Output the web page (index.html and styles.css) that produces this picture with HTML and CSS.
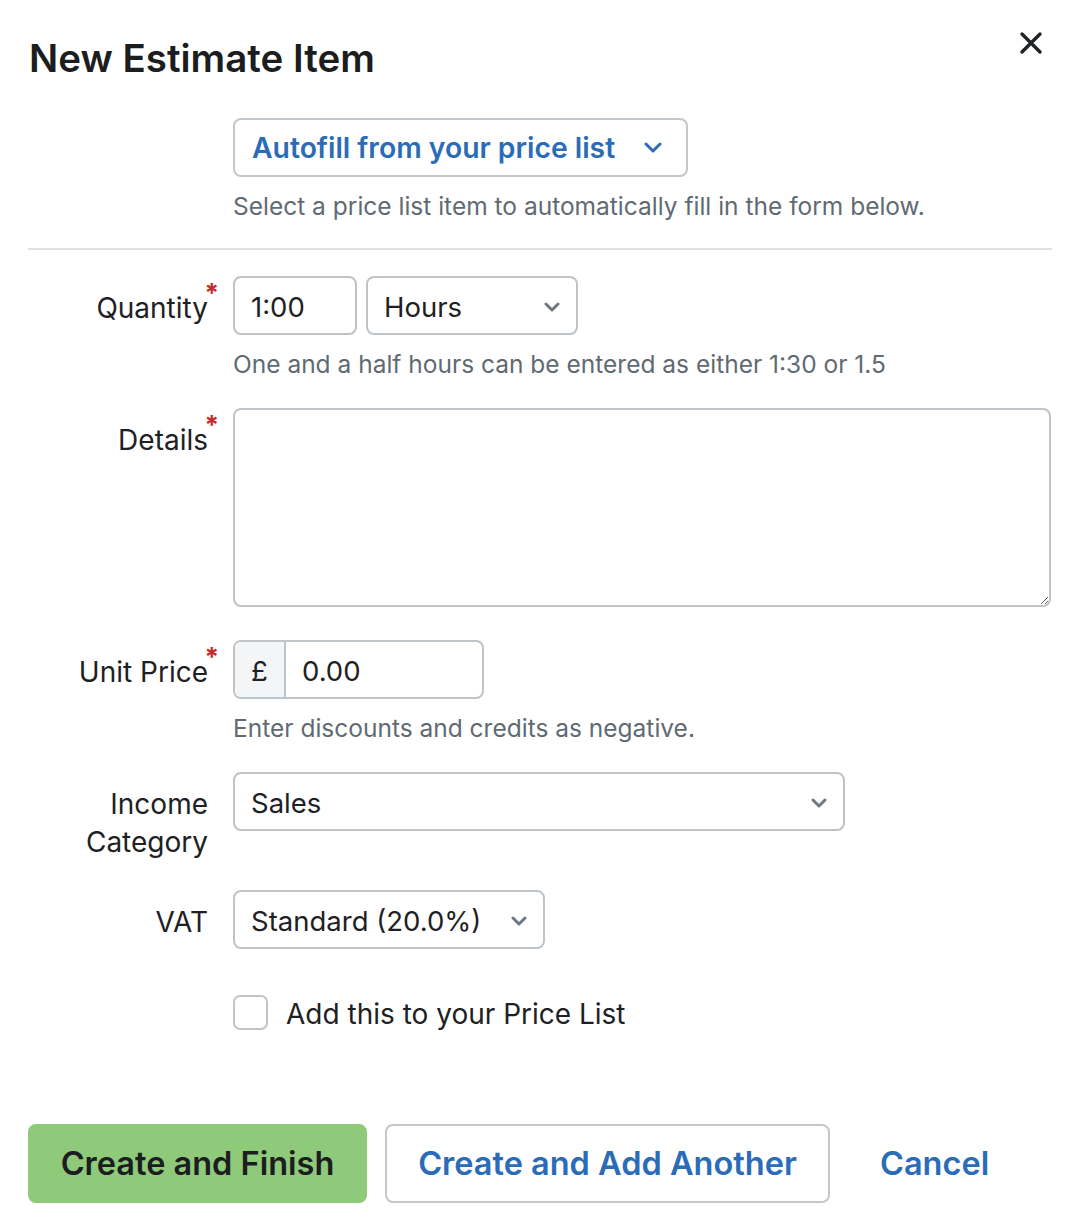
FILE: index.html
```html
<!DOCTYPE html>
<html lang="en">
<head>
<meta charset="utf-8">
<title>New Estimate Item</title>
<link rel="stylesheet" href="styles.css">
</head>
<body>
<div class="modal">
  <header class="modal-header">
    <h1 class="modal-title">New Estimate Item</h1>
    <button class="close-btn" aria-label="Close">
      <svg width="24" height="24" viewBox="0 0 24 24"><path d="M3 3 L21 21 M21 3 L3 21" stroke="#1f2326" stroke-width="3.4" stroke-linecap="round" fill="none"/></svg>
    </button>
  </header>

  <section class="autofill">
    <button class="autofill-btn">
      <span>Autofill from your price list</span>
      <svg class="chev" width="18" height="12" viewBox="0 0 18 12"><path d="M2 2 L9 9 L16 2" stroke="#2a6cb7" stroke-width="3" fill="none" stroke-linecap="round" stroke-linejoin="round"/></svg>
    </button>
    <p class="hint">Select a price list item to automatically fill in the form below.</p>
  </section>

  <hr class="divider">

  <div class="row">
    <label class="label req">Quantity</label>
    <div class="field">
      <div class="inline">
        <div class="input qty">1:00</div>
        <div class="input select hours"><span>Hours</span>
          <svg width="16" height="10" viewBox="0 0 16 10"><path d="M2 2 L8 8 L14 2" stroke="#6d7880" stroke-width="3" fill="none" stroke-linecap="round" stroke-linejoin="round"/></svg>
        </div>
      </div>
      <p class="hint">One and a half hours can be entered as either 1:30 or 1.5</p>
    </div>
  </div>

  <div class="row">
    <label class="label req">Details</label>
    <div class="field">
      <textarea class="textarea"></textarea>
    </div>
  </div>

  <div class="row">
    <label class="label req">Unit Price</label>
    <div class="field">
      <div class="input-group">
        <span class="addon">£</span>
        <span class="group-value">0.00</span>
      </div>
      <p class="hint">Enter discounts and credits as negative.</p>
    </div>
  </div>

  <div class="row">
    <label class="label">Income<br>Category</label>
    <div class="field">
      <div class="input select income"><span>Sales</span>
        <svg width="16" height="10" viewBox="0 0 16 10"><path d="M2 2 L8 8 L14 2" stroke="#6d7880" stroke-width="3" fill="none" stroke-linecap="round" stroke-linejoin="round"/></svg>
      </div>
    </div>
  </div>

  <div class="row">
    <label class="label">VAT</label>
    <div class="field">
      <div class="input select vat"><span>Standard (20.0%)</span>
        <svg width="16" height="10" viewBox="0 0 16 10"><path d="M2 2 L8 8 L14 2" stroke="#6d7880" stroke-width="3" fill="none" stroke-linecap="round" stroke-linejoin="round"/></svg>
      </div>
    </div>
  </div>

  <div class="check-row">
    <span class="checkbox"></span>
    <span class="check-label">Add this to your Price List</span>
  </div>

  <footer class="actions">
    <button class="btn btn-primary">Create and Finish</button>
    <button class="btn btn-secondary">Create and Add Another</button>
    <button class="btn btn-link">Cancel</button>
  </footer>
</div>
</body>
</html>
```

FILE: styles.css
```css
* { box-sizing: border-box; }
html, body { margin: 0; padding: 0; background: #fff; }
body {
  font-family: "Inter", "Lato", sans-serif;
  color: #1e2124;
}
.modal {
  width: 1074px;
  padding: 31px 22px 0 28px;
}
.modal-header {
  display: flex;
  justify-content: space-between;
  align-items: flex-start;
}
.modal-title {
  margin: 4px 0 0 1px;
  font-size: 38.5px;
  line-height: 46px;
  font-weight: 600;
  color: #1b1d1f;
}
.close-btn {
  border: 0;
  background: none;
  padding: 0;
  margin: 0 9px 0 0;
  width: 24px;
  height: 24px;
}
.autofill {
  margin: 37px 0 0 205px;
}
.autofill-btn {
  height: 59px;
  border: 2px solid #c3c8cd;
  border-radius: 8px;
  background: #fff;
  padding: 0 24px 0 17px;
  display: flex;
  align-items: center;
  gap: 29px;
  font-family: inherit;
  font-size: 28.3px;
  font-weight: 600;
  color: #2a6cb7;
}
.hint {
  margin: 14px 0 0;
  font-size: 24.5px;
  line-height: 30px;
  color: #5f6a73;
}
.divider {
  margin: 27px 0 26px;
  border: 0;
  height: 2px;
  background: #dfe2e5;
}
.row {
  display: flex;
  gap: 25px;
  margin-bottom: 29px;
}
.label {
  width: 180px;
  flex: none;
  text-align: right;
  padding-top: 13px;
  font-size: 28px;
  line-height: 38px;
  color: #1e2124;
  position: relative;
}
.label.req::after {
  content: "*";
  position: absolute;
  right: -11px;
  top: 4px;
  color: #c62828;
  font-weight: 700;
  font-size: 26px;
  line-height: 26px;
}
.field { flex: 1; }
.inline { display: flex; gap: 9px; }
.input {
  height: 59px;
  border: 2px solid #bfc4c9;
  border-radius: 8px;
  background: #fff;
  display: flex;
  align-items: center;
  padding: 2px 16px 0;
  font-size: 27.5px;
  color: #1e2124;
}
.qty { width: 124px; }
.select { justify-content: space-between; padding-right: 16px; }
.hours { width: 212px; }
.income { width: 612px; }
.vat { width: 312px; }
.textarea {
  display: block;
  width: 818px;
  height: 199px;
  border: 2px solid #bfc4c9;
  border-radius: 8px;
  margin-bottom: 4px;
  font-family: inherit;
  font-size: 27px;
}
.input-group {
  display: flex;
  width: 251px;
  height: 59px;
  border: 2px solid #bfc4c9;
  border-radius: 8px;
  overflow: hidden;
  font-size: 27.5px;
}
.addon {
  width: 51px;
  flex: none;
  background: #f4f5f7;
  border-right: 2px solid #bfc4c9;
  display: flex;
  align-items: center;
  justify-content: center;
  padding-top: 2px;
}
.group-value {
  display: flex;
  align-items: center;
  padding: 2px 0 0 16px;
}
.check-row {
  display: flex;
  align-items: center;
  gap: 18px;
  margin: 41px 0 0 205px;
}
.checkbox {
  width: 35px;
  height: 35px;
  border: 2px solid #bfc4c9;
  border-radius: 7px;
  background: #fff;
}
.check-label {
  font-size: 28px;
  line-height: 40px;
  color: #1e2124;
  margin-top: 4px;
}
.actions {
  display: flex;
  gap: 18px;
  margin-top: 90px;
}
.btn {
  height: 79px;
  border-radius: 8px;
  font-family: inherit;
  font-size: 32.5px;
  font-weight: 600;
  padding: 0 30px;
  background: #fff;
  border: 2px solid #c3c8cd;
  color: #2a6cb7;
  white-space: nowrap;
}
.btn-primary {
  width: 339px;
  background: #8fc97a;
  border-color: #8fc97a;
  color: #1b1d1f;
}
.btn-secondary { width: 445px; }
.btn-link { border-color: transparent; background: none; padding: 0 30px; }
```
